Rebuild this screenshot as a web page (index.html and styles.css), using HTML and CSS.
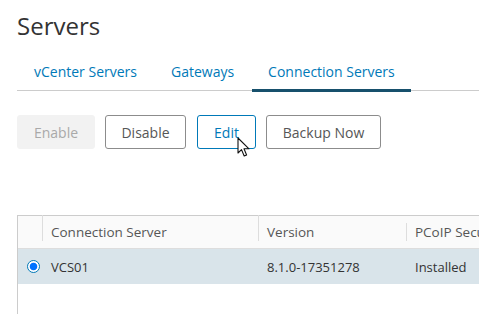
FILE: index.html
```html
<!DOCTYPE html>
<html lang="en">
<head>
    <meta charset="UTF-8">
    <title>Servers</title>
    <link rel="stylesheet" href="styles.css">
</head>
<body class="page">
<div class="root">
    <h1 class="title">Servers</h1>
    <div class="tabs">
        <div class="tab">vCenter Servers</div>
        <div class="tab">Gateways</div>
        <div class="tab active">Connection Servers</div>
    </div>
    <div class="actions">
        <button class="btn disabled">Enable</button>
        <button class="btn">Disable</button>
        <button class="btn hover">Edit</button>
        <button class="btn">Backup Now</button>
    </div>
    <div class="grid">
        <div class="row head">
            <div class="cell sel"></div>
            <div class="cell c1"><span class="sep"></span>Connection Server</div>
            <div class="cell c2"><span class="sep"></span>Version</div>
            <div class="cell c3"><span class="sep"></span>PCoIP Secure Gateway</div>
        </div>
        <div class="row selected">
            <div class="cell sel"><span class="radio"></span></div>
            <div class="cell c1">VCS01</div>
            <div class="cell c2">8.1.0-17351278</div>
            <div class="cell c3">Installed</div>
        </div>
    </div>
    <!-- mouse pointer over Edit -->
    <svg class="cursor" width="14" height="21" viewBox="0 0 14 21">
        <path d="M1 1 L1 16 L4.5 12.6 L7.2 19 L9.6 18 L7 11.8 L12 11.8 Z" fill="#fff" stroke="#111" stroke-width="1.1" stroke-linejoin="round"/>
    </svg>
</div>
</body>
</html>
```

FILE: styles.css
```css
* {
    box-sizing: border-box;
}

body {
    margin: 0;
    background: #fff;
    font-family: "Open Sans", "Liberation Sans", sans-serif;
    overflow: hidden;
}

.root {
    position: relative;
    padding-left: 17px;
    width: 479px;
    height: 314px;
    overflow: hidden;
}

.title {
    margin: 0;
    padding-top: 10px;
    font-size: 24px;
    font-weight: 400;
    line-height: 32px;
    color: #333;
}

.tabs {
    display: flex;
    margin-top: 18px;
    border-bottom: 1px solid #ccc;
    height: 31px;
}

.tab {
    padding: 0 17px;
    font-size: 14px;
    line-height: 24px;
    color: #0079b8;
    white-space: nowrap;
}

.tab:nth-child(2) {
    padding-right: 18px;
}

.tab.active {
    padding: 0 16px;
    border-bottom: 3px solid #17506c;
    height: 32px;
}

.actions {
    display: flex;
    gap: 10px;
    margin-top: 24px;
}

.btn {
    height: 34px;
    padding: 0;
    font-family: inherit;
    font-size: 14px;
    color: #565656;
    background: #fff;
    border: 1px solid #8c8c8c;
    border-radius: 3px;
    white-space: nowrap;
}

.btn.disabled {
    background: #f2f2f2;
    border-color: #f2f2f2;
    color: #a9a9a9;
    width: 78px;
}

.btn.hover {
    border-color: #0079b8;
    color: #0079b8;
    width: 59px;
}

.btn:nth-child(2) {
    width: 81px;
}

.btn:nth-child(3) {
    margin-left: 1px;
}

.btn:nth-child(4) {
    width: 115px;
}

.grid {
    margin-top: 66px;
    border-top: 1px solid #ccc;
    border-left: 1px solid #ccc;
    height: 100px;
}

.row {
    display: flex;
    font-size: 13px;
    color: #333;
}

.row.head {
    background: #fafafa;
    height: 33px;
    border-bottom: 1px solid #ddd;
    color: #565656;
    font-size: 13.5px;
    align-items: center;
}

.row.selected {
    background: #d9e4ea;
    height: 35px;
    align-items: center;
}

.cell {
    position: relative;
    padding-left: 9px;
    white-space: nowrap;
    flex: none;
}

.cell.sel {
    width: 24px;
    padding: 0;
    display: flex;
    justify-content: center;
}

.cell.c1 {
    width: 216px;
}

.cell.c2 {
    width: 148px;
}

.cell.c3 {
    width: 74px;
    overflow: hidden;
}

.sep {
    position: absolute;
    left: 0;
    top: -8px;
    width: 1px;
    height: 26px;
    background: #ddd;
}

.radio {
    display: block;
    width: 13px;
    height: 13px;
    border-radius: 50%;
    border: 1px solid #0079b8;
    background: radial-gradient(circle, #0072ff 0 3.4px, #fff 4.2px);
    margin-left: 6px;
}

.cursor {
    position: absolute;
    left: 237px;
    top: 137px;
}
```
